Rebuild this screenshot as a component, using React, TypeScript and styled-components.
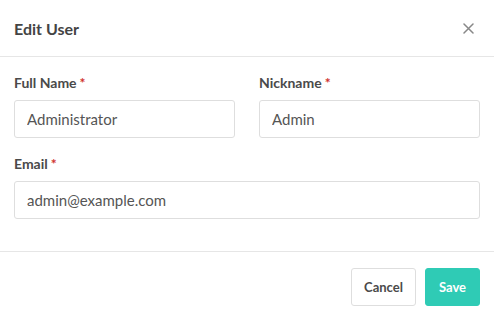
import React from "react";
import styled, { createGlobalStyle } from "styled-components";

const Global = createGlobalStyle`
  html, body { margin: 0; padding: 0; background: #fff; }
  body { font-family: "Source Sans Pro", Lato, "Noto Sans", sans-serif; }
  * { box-sizing: border-box; }
`;

const Modal = styled.div`
  width: 494px;
  height: 319px;
  background: #fff;
  display: flex;
  flex-direction: column;
`;

const Header = styled.div`
  height: 57px;
  padding: 0 14px;
  display: flex;
  align-items: center;
  justify-content: space-between;
  border-bottom: 1px solid #e6e6e6;
`;

const Title = styled.h2`
  margin: 0;
  font-size: 16px;
  font-weight: 700;
  color: #444;
`;

const Close = styled.button`
  border: 0;
  background: none;
  padding: 0;
  width: 14px;
  height: 14px;
  margin-right: 5px;
  display: flex;
  align-items: center;
  justify-content: center;
  cursor: pointer;
`;

const Body = styled.div`
  padding: 17px 14px 0;
  height: 195px;
  border-bottom: 1px solid #e6e6e6;
  display: flex;
  flex-direction: column;
  gap: 17px;
`;

const Row = styled.div`
  display: grid;
  grid-template-columns: 1fr 1fr;
  column-gap: 24px;
`;

const Field = styled.div`
  display: flex;
  flex-direction: column;
  gap: 8px;
`;

const Label = styled.label`
  font-size: 14px;
  font-weight: 700;
  color: #4a4a4a;
  line-height: 18px;
`;

const Req = styled.span`
  color: #d0312d;
  margin-left: 3px;
`;

const Input = styled.input`
  height: 38px;
  width: 100%;
  border: 1px solid #dedede;
  border-radius: 3px;
  padding: 0 12px;
  font-family: inherit;
  font-size: 15px;
  color: #555;
  outline: none;
`;

const Footer = styled.div`
  flex: 1;
  display: flex;
  justify-content: flex-end;
  align-items: center;
  gap: 9px;
  padding: 2px 14px 0;
`;

const Button = styled.button<{ $primary?: boolean }>`
  height: 38px;
  padding: 0 ${(p) => (p.$primary ? "13px" : "12px")};
  border-radius: 3px;
  font-family: inherit;
  font-weight: 700;
  font-size: 13px;
  cursor: pointer;
  border: 1px solid ${(p) => (p.$primary ? "#2fcbb5" : "#dedede")};
  background: ${(p) => (p.$primary ? "#2fcbb5" : "#fff")};
  color: ${(p) => (p.$primary ? "#fff" : "#4a4a4a")};
`;

export default function App() {
  return (
    <>
      <Global />
      <Modal>
        <Header>
          <Title>Edit User</Title>
          <Close aria-label="Close">
            <svg width="11" height="11" viewBox="0 0 11 11">
              <path d="M1 1L10 10M10 1L1 10" stroke="#888" strokeWidth="1.5" strokeLinecap="round" />
            </svg>
          </Close>
        </Header>
        <Body>
          <Row>
            <Field>
              <Label>Full Name<Req>*</Req></Label>
              <Input defaultValue="Administrator" />
            </Field>
            <Field>
              <Label>Nickname<Req>*</Req></Label>
              <Input defaultValue="Admin" />
            </Field>
          </Row>
          <Field>
            <Label>Email<Req>*</Req></Label>
            <Input defaultValue="admin@example.com" />
          </Field>
        </Body>
        <Footer>
          <Button>Cancel</Button>
          <Button $primary>Save</Button>
        </Footer>
      </Modal>
    </>
  );
}
